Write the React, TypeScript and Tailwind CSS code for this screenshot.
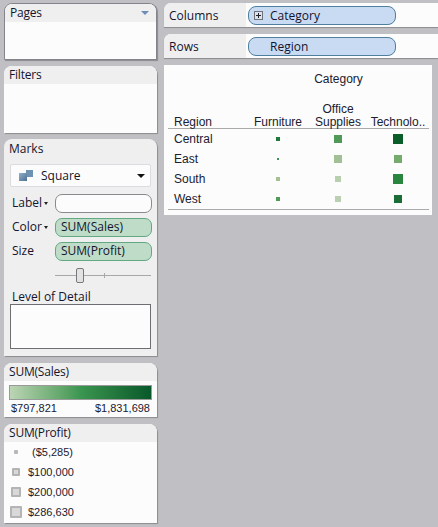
const ui = '"Open Sans", "Noto Sans", sans-serif';
const arial = '"Liberation Sans", Arial, sans-serif';

function Card({ title, className = '', bodyClass = '', children, extra, outlined }: any) {
  return (
    <div className={`rounded-t-[8px] overflow-hidden shadow-[1px_1px_1px_#8a8a90] bg-[#fcfcfc] ${outlined ? 'border border-[#84848c]' : ''} ${className}`}>
      <div className="h-[18px] bg-[#efefef] flex items-center justify-between pl-[5px] pr-[7px] text-[12px] text-[#14142e] tracking-[-0.2px]" style={{ fontFamily: ui }}>
        <span>{title}</span>
        {extra}
      </div>
      <div className={bodyClass}>{children}</div>
    </div>
  );
}

function Shelf({ label, children }: any) {
  return (
    <div className="h-[24px] flex rounded-tl-[7px] shadow-[0_1px_1px_#8a8a90] bg-[#fcfcfc]">
      <div className="w-[82px] bg-[#efefef] rounded-tl-[7px] pl-[5px] pt-[4px] text-[12px] text-[#14142e]" style={{ fontFamily: ui }}>{label}</div>
      {children}
    </div>
  );
}

function Pill({ children, plus }: any) {
  return (
    <div className="w-[148px] h-[19px] mt-[3px] ml-[2px] rounded-[8px] border border-[#4f7f9f] bg-[#c9daf3] flex items-center text-[12px] text-[#14142e]" style={{ fontFamily: ui }}>
      <span className="w-[9px] h-[9px] ml-[5px] flex items-center justify-center shrink-0">
        {plus && <svg width="9" height="9" viewBox="0 0 9 9"><rect x="0.5" y="0.5" width="8" height="8" fill="#d8e2f0" stroke="#70707a" /><path d="M2 4.5h5M4.5 2v5" stroke="#222" strokeWidth="1" /></svg>}
      </span>
      <span className="ml-[7px]">{children}</span>
    </div>
  );
}

function MarkRow({ label, caret, children }: any) {
  return (
    <div className="flex items-center h-[24px]">
      <div className="w-[46px] pl-[8px] text-[12px] text-[#14142e] flex items-center" style={{ fontFamily: ui }}>
        <span>{label}</span>
        {caret && <span className="ml-[2px] w-0 h-0 border-x-[2.5px] border-x-transparent border-t-[3px] border-t-[#222]" />}
      </div>
      {children}
    </div>
  );
}

const GreenPill = ({ text }: any) => (
  <div className="w-[97px] h-[19px] ml-[5px] rounded-[7px] border border-[#62a883] bg-[#bedcc8] pl-[5px] flex items-center text-[12px] text-[#14142e]" style={{ fontFamily: ui }}>{text}</div>
);

const Sq = ({ s, c }: any) => (
  <div className="w-[60px] flex items-center justify-center">
    <div style={{ width: s, height: s, background: c }} />
  </div>
);

const rows: [string, [number, string], [number, string], [number, string]][] = [
  ['Central', [4, '#1e7a3c'], [8, '#4f9a58'], [10, '#0b5e2a']],
  ['East', [2, '#3f9450'], [8, '#a1c095'], [8, '#75ab6d']],
  ['South', [4, '#a3c193'], [6, '#b7cfae'], [10, '#2a853f']],
  ['West', [4, '#519a5a'], [6, '#bbd0b3'], [8, '#1a6e35']],
];

const legend: [number, number, string][] = [
  [4, 0, '($5,285)'],
  [8, 2, '$100,000'],
  [10, 2, '$200,000'],
  [12, 2, '$286,630'],
];

export default function App() {
  return (
    <div className="w-[438px] h-[527px] bg-[#c0c0c4] flex overflow-hidden relative">
      <div className="w-[153px] ml-[4px] mr-[7px] pt-[3px] flex flex-col shrink-0">
        <Card title="Pages" outlined className="h-[57px]" extra={<span className="w-0 h-0 border-x-[4px] border-x-transparent border-t-[4px] border-t-[#6d8db8]" />} />
        <Card title="Filters" className="h-[67px] mt-[6px]" />
        <div className="h-[217px] mt-[6px] rounded-t-[8px] bg-[#efefef] shadow-[1px_1px_1px_#8a8a90] flex flex-col">
          <div className="h-[18px] pl-[5px] pt-[1px] text-[12px] text-[#14142e]" style={{ fontFamily: ui }}>Marks</div>
          <div className="mt-[7px] mx-[6px] h-[23px] bg-[#fcfcfc] border border-[#dcdce0] rounded-[2px] flex items-center text-[12px] text-[#14142e]" style={{ fontFamily: ui }}>
            <svg width="14" height="12" viewBox="0 0 14 12" className="ml-[8px]">
              <defs><linearGradient id="g" x1="0" y1="0" x2="1" y2="1"><stop offset="0" stopColor="#90b0cc" /><stop offset="1" stopColor="#4d7090" /></linearGradient></defs>
              <rect x="7" y="0" width="7" height="7" fill="#6e92b2" />
              <rect x="0" y="3" width="8" height="8" fill="url(#g)" />
            </svg>
            <span className="ml-[8px] flex-1">Square</span>
            <span className="mr-[5px] w-0 h-0 border-x-[4px] border-x-transparent border-t-[4px] border-t-[#111]" />
          </div>
          <div className="mt-[4px]">
            <MarkRow label="Label" caret>
              <div className="w-[97px] h-[19px] ml-[5px] rounded-[7px] border border-[#8a8a8e] bg-[#fcfcfc]" />
            </MarkRow>
            <MarkRow label="Color" caret><GreenPill text="SUM(Sales)" /></MarkRow>
            <MarkRow label="Size"><GreenPill text="SUM(Profit)" /></MarkRow>
          </div>
          <svg width="97" height="18" viewBox="0 0 97 18" className="ml-[51px] mt-[4px] shrink-0">
            <path d="M0 8.5h96" stroke="#a8a8a8" />
            <path d="M49.5 6v5" stroke="#a8a8a8" />
            <rect x="21.5" y="1.5" width="7" height="14" rx="1.5" fill="#e2e2e2" stroke="#77777c" />
          </svg>
          <div className="mt-[4px] pl-[8px] text-[12px] leading-[15px] text-[#14142e]" style={{ fontFamily: ui }}>Level of Detail</div>
          <div className="mx-[6px] h-[45px] bg-[#fcfcfc] border border-[#6e6e72]" />
        </div>
        <Card title="SUM(Sales)" className="h-[54px] mt-[7px]">
          <div className="mx-[5px] mt-[4px] h-[15px] border border-[#9a9a9a] bg-gradient-to-r from-[#bcd5b5] via-[#3a9650] to-[#07592a]" />
          <div className="mx-[7px] mt-[1px] flex justify-between text-[11px] leading-[14px] text-[#1a2030]" style={{ fontFamily: arial }}>
            <span>$797,821</span><span>$1,831,698</span>
          </div>
        </Card>
        <Card title="SUM(Profit)" className="h-[99px] mt-[7px]">
          {legend.map(([s, b, t], i) => (
            <div key={t} className="h-[20px] flex items-center text-[11px] text-[#1a2030]" style={{ fontFamily: arial }}>
              <div className="w-[24px] pl-[6px] pr-[6px] flex justify-center shrink-0">
                <div className="box-border shrink-0 rounded-[1px] bg-[#d8d8d8]" style={{ width: s, height: s, border: b ? `${b}px solid #b4b4b4` : undefined, background: b ? '#d8d8d8' : '#b8b8b8' }} />
              </div>
              <span className={i === 0 ? 'ml-[4px]' : ''}>{t}</span>
            </div>
          ))}
        </Card>
      </div>
      <div className="flex-1 pt-[3px] min-w-0">
        <Shelf label="Columns"><Pill plus>Category</Pill></Shelf>
        <div className="mt-[7px]"><Shelf label="Rows"><Pill>Region</Pill></Shelf></div>
        <div className="mt-[7px] w-[268px] h-[150px] bg-[#fcfcfc] pl-[4px] text-[12px] text-[#1a2030]" style={{ fontFamily: arial }}>
          <div className="w-[261px] pl-[80px] text-center pt-[7px] leading-[14px] h-[37px]">Category</div>
          <div className="h-[27px] flex items-end border-b border-[#aaaaaa] w-[261px] leading-[13px]">
            <div className="w-[80px] pl-[6px] -mb-[1px]">Region</div>
            <div className="w-[60px] text-center -mb-[1px]">Furniture</div>
            <div className="w-[60px] text-center -mb-[1px]">Office<br />Supplies</div>
            <div className="w-[60px] text-center whitespace-nowrap -mb-[1px]">Technolo..</div>
          </div>
          <div className="w-[261px] border-b border-[#aaaaaa]">
            {rows.map((r) => (
              <div key={r[0]} className="h-[20px] flex items-center">
                <div className="w-[80px] pl-[6px]">{r[0]}</div>
                <Sq s={r[1][0]} c={r[1][1]} />
                <Sq s={r[2][0]} c={r[2][1]} />
                <Sq s={r[3][0]} c={r[3][1]} />
              </div>
            ))}
          </div>
        </div>
      </div>
    </div>
  );
}
